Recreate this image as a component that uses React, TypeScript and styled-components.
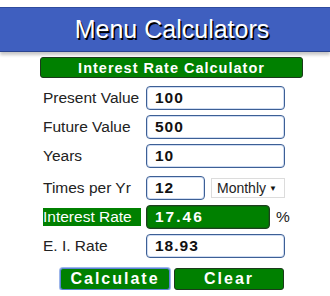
import React from 'react';
import styled, { createGlobalStyle } from 'styled-components';

const GlobalStyle = createGlobalStyle`
  body {
    margin: 0;
    background: #fff;
    font-family: "Liberation Sans", Arial, sans-serif;
  }
`;

const Page = styled.div`
  width: 330px;
  padding-top: 7px;
`;

const Header = styled.div`
  height: 45px;
  background: #3f5fbf;
  border-top: 1px solid #2f4c9f;
  border-bottom: 1px solid #2a448f;
  box-sizing: border-box;
  display: flex;
  align-items: center;
  justify-content: center;
  padding-left: 14px;
  box-shadow: 0 3px 3px #c8c8c8;
`;

const HeaderTitle = styled.h1`
  margin: 0;
  font-size: 25px;
  font-weight: normal;
  color: #fff;
  text-shadow: 1.5px 1.5px 0 #000;
`;

const TitleBar = styled.div`
  margin: 5px 27px 0 40px;
  height: 21px;
  box-sizing: border-box;
  background: #008000;
  border: 1px solid #1c3a1c;
  border-radius: 3px;
  color: #fff;
  font-weight: bold;
  font-size: 14.5px;
  letter-spacing: 1px;
  display: flex;
  align-items: center;
  justify-content: center;
`;

const Form = styled.div`
  padding: 8px 0 0 43px;
`;

const Row = styled.div<{ $gap?: number }>`
  display: flex;
  align-items: center;
  height: 24px;
  margin-top: ${(p) => p.$gap ?? 5}px;
`;

const Label = styled.div<{ $hi?: boolean }>`
  width: 98px;
  margin-right: 5px;
  font-size: 15.5px;
  height: 18px;
  line-height: 18px;
  white-space: nowrap;
  background: ${(p) => (p.$hi ? '#008000' : 'transparent')};
  color: ${(p) => (p.$hi ? '#fff' : '#222')};
`;

const Field = styled.input<{ $w?: number; $hi?: boolean }>`
  width: ${(p) => p.$w ?? 139}px;
  height: 24px;
  box-sizing: border-box;
  border: 1px solid ${(p) => (p.$hi ? '#1f3f1f' : '#3d5f95')};
  border-radius: 4px;
  box-shadow: inset 0 0 0 1px ${(p) => (p.$hi ? '#0a6a0a' : '#cfdcf2')};
  background: ${(p) => (p.$hi ? '#008000' : '#fff')};
  color: ${(p) => (p.$hi ? '#fff' : '#111')};
  font-family: "Liberation Sans", Arial, sans-serif;
  font-weight: bold;
  font-size: 15.5px;
  letter-spacing: ${(p) => (p.$hi ? 2 : 1)}px;
  padding: 0 8px;
  outline: none;
`;

const Select = styled.div`
  margin-left: 6px;
  width: 74px;
  height: 20px;
  box-sizing: border-box;
  border: 1px solid #dcdcdc;
  background: #fff;
  display: flex;
  align-items: center;
  justify-content: space-between;
  padding: 0 7px 0 5px;
  font-size: 14px;
  color: #222;
`;

const Arrow = styled.span`
  font-size: 8px;
  color: #111;
`;

const Unit = styled.span`
  margin-left: 6px;
  font-size: 15.5px;
  color: #222;
`;

const Buttons = styled.div`
  display: flex;
  gap: 4px;
  margin: 10px 0 0 60px;
`;

const Button = styled.button<{ $focus?: boolean }>`
  width: 110px;
  height: 22px;
  box-sizing: border-box;
  background: #008000;
  border: 1px solid ${(p) => (p.$focus ? '#5b82d6' : '#1c3a1c')};
  box-shadow: ${(p) => (p.$focus ? '0 0 0 1px #9db6ea' : 'none')};
  border-radius: 3px;
  color: #fff;
  font-family: "Liberation Sans", Arial, sans-serif;
  font-weight: bold;
  font-size: 16px;
  letter-spacing: 2px;
  padding: 0;
  display: flex;
  align-items: center;
  justify-content: center;
`;

export default function App() {
  return (
    <Page>
      <GlobalStyle />
      <Header>
        <HeaderTitle>Menu Calculators</HeaderTitle>
      </Header>
      <TitleBar>Interest Rate Calculator</TitleBar>
      <Form>
        <Row $gap={0}>
          <Label>Present Value</Label>
          <Field defaultValue="100" />
        </Row>
        <Row>
          <Label>Future Value</Label>
          <Field defaultValue="500" />
        </Row>
        <Row>
          <Label>Years</Label>
          <Field defaultValue="10" />
        </Row>
        <Row $gap={8}>
          <Label>Times per Yr</Label>
          <Field $w={59} defaultValue="12" />
          <Select>
            Monthly <Arrow>▼</Arrow>
          </Select>
        </Row>
        <Row>
          <Label $hi>Interest Rate</Label>
          <Field $w={124} $hi defaultValue="17.46" />
          <Unit>%</Unit>
        </Row>
        <Row>
          <Label>E. I. Rate</Label>
          <Field defaultValue="18.93" />
        </Row>
      </Form>
      <Buttons>
        <Button $focus>Calculate</Button>
        <Button>Clear</Button>
      </Buttons>
    </Page>
  );
}
